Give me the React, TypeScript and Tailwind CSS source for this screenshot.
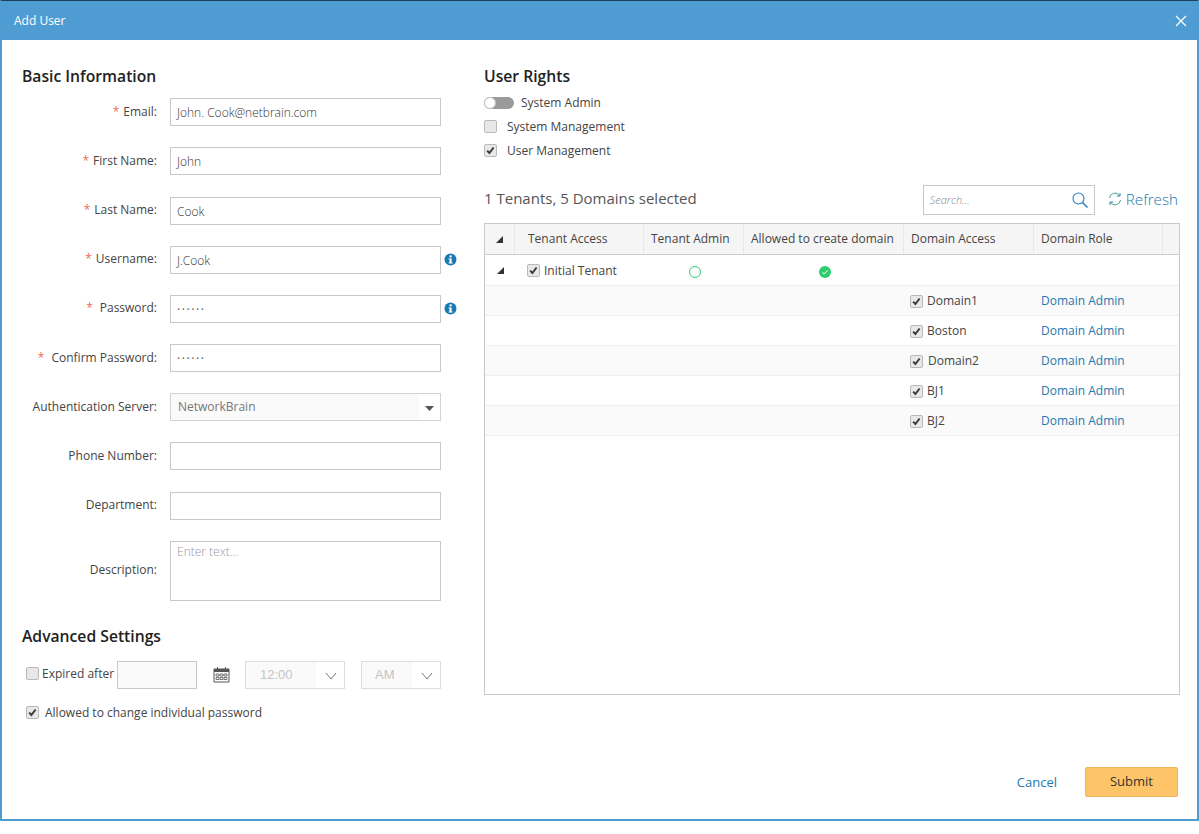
import React from "react";

const Box = ({ checked = false }: { checked?: boolean }) => (
  <span className="inline-flex w-[13px] h-[13px] shrink-0 items-center justify-center rounded-[2px] border border-[#b9b9b9] bg-[#e8e8e8]">
    {checked && (
      <svg width="9" height="9" viewBox="0 0 9 9">
        <path d="M1.2 4.6 L3.4 7 L7.6 1.5" fill="none" stroke="#3a3a3a" strokeWidth="2" />
      </svg>
    )}
  </span>
);

const Info = () => (
  <svg width="13" height="13" viewBox="0 0 13 13" className="shrink-0">
    <circle cx="6.5" cy="6.5" r="6" fill="#1b78b0" />
    <rect x="5.5" y="2.4" width="2.2" height="2" fill="#fff" />
    <path d="M4.6 5.4H7.6V9.4H8.6V10.6H4.6V9.4H5.5V6.6H4.6Z" fill="#fff" />
  </svg>
);

const Chevron = () => (
  <svg width="12" height="8" viewBox="0 0 12 8" className="ml-[2px]">
    <path d="M1 1 L6 7 L11 1" fill="none" stroke="#777" strokeWidth="1" />
  </svg>
);

const Tri = () => (
  <svg width="7" height="7" viewBox="0 0 7 7">
    <path d="M7 0V7H0Z" fill="#333" />
  </svg>
);

const Field = ({ label, req, gap, children, info, h = "h-[28px]" }: { label: string; req?: boolean; gap?: boolean; children: React.ReactNode; info?: boolean; h?: string }) => (
  <div className={`flex items-start ${h}`}>
    <div className="w-[135px] shrink-0 h-full pb-[1px] flex items-center justify-end text-[12px] text-[#444]">
      {req && <span className={`text-[#f06a55] ${gap ? "mr-[7px]" : "mr-[4px]"}`}>*</span>}
      {label}
    </div>
    <div className="ml-[13px] w-[271px] shrink-0 h-full">{children}</div>
    {info && <div className="ml-[3px] h-[28px] flex items-center"><Info /></div>}
  </div>
);

const TextBox = ({ value, dots }: { value?: string; dots?: boolean }) => (
  <div className={`h-full border border-[#c8c8c8] bg-white px-[6px] pt-[2px] flex items-center text-[12px] ${dots ? "font-normal tracking-[1.6px] text-[#555]" : "font-light text-[#333]"}`}>{value}</div>
);

const heads = ["", "Tenant Access", "Tenant Admin", "Allowed to create domain", "Domain Access", "Domain Role", ""];
const cols = "grid grid-cols-[30px_129px_100px_160px_130px_129px_1fr]";
const domains = ["Domain1", "Boston", "Domain2", "BJ1", "BJ2"];

export default function App() {
  return (
    <div className="w-[1199px] h-[834px] bg-white overflow-hidden" style={{ fontFamily: '"Open Sans", "Noto Sans", sans-serif' }}>
      <div className="h-[821px] flex flex-col border-t border-t-[#1f3f5f] border-x-2 border-b-2 border-x-[#4f9cd2] border-b-[#4f9cd2]">
        <div className="h-[39px] shrink-0 -mx-[2px] bg-[#4f9cd2] flex items-center justify-between pl-[14px] pr-[12px] text-white text-[12px]">
          <span>Add User</span>
          <svg width="12" height="12" viewBox="0 0 12 12">
            <path d="M1 1 L11 11 M11 1 L1 11" stroke="#fff" strokeWidth="1.2" />
          </svg>
        </div>

        <div className="flex-1 flex pl-[20px] min-h-0">
          <div className="w-[462px] shrink-0 pt-[26px]">
            <h2 className="h-[20px] leading-[20px] text-[15.7px] font-semibold text-[#222]">Basic Information</h2>
            <div className="mt-[12.3px] flex flex-col gap-[21.16px]">
              <Field label="Email:" req><TextBox value="John. Cook@netbrain.com" /></Field>
              <Field label="First Name:" req><TextBox value="John" /></Field>
              <Field label="Last Name:" req><TextBox value="Cook" /></Field>
              <Field label="Username:" req info><TextBox value="J.Cook" /></Field>
              <Field label="Password:" req gap info><TextBox dots value="······" /></Field>
              <Field label="Confirm Password:" req gap><TextBox dots value="······" /></Field>
              <Field label="Authentication Server:">
                <div className="h-full border border-[#d2d2d2] flex text-[12px] text-[#777]">
                  <div className="flex-1 bg-[#fafafa] px-[7px] flex items-center">NetworkBrain</div>
                  <div className="w-[21px] flex items-center justify-center pt-[2px]">
                    <svg width="9" height="5" viewBox="0 0 9 5"><path d="M0 0H9L4.5 5Z" fill="#555" /></svg>
                  </div>
                </div>
              </Field>
              <Field label="Phone Number:"><TextBox /></Field>
              <Field label="Department:"><TextBox /></Field>
              <Field label="Description:" h="h-[60px]">
                <div className="h-full border border-[#c8c8c8] px-[6px] py-[1px] text-[12px] font-light text-[#999]">Enter text...</div>
              </Field>
            </div>
            <h2 className="mt-[25.26px] h-[20px] leading-[20px] text-[15.7px] font-semibold text-[#222]">Advanced Settings</h2>
            <div className="mt-[15px] h-[28px] flex items-start pl-[4px]">
              <div className="h-[26px] flex items-center">
                <Box />
                <span className="ml-[3px] text-[12px] text-[#444] w-[75px]">Expired after</span>
              </div>
              <div className="w-[80px] h-full border border-[#c8c8c8] bg-[#fafafa]" />
              <div className="ml-[16px] h-full flex items-center">
                <svg width="17" height="17" viewBox="0 0 17 17">
                  <path d="M1 3H16V16H1Z" fill="none" stroke="#555" />
                  <path d="M1 3H16V6H1Z" fill="#555" />
                  <path d="M4.5 1V4M12.5 1V4" stroke="#555" />
                  <path d="M3 8H6V10H3ZM7 8H10V10H7ZM11 8H14V10H11ZM3 11.5H6V13.5H3ZM7 11.5H10V13.5H7ZM11 11.5H14V13.5H11Z" fill="none" stroke="#555" strokeWidth="0.8" />
                </svg>
              </div>
              <div className="ml-[15px] w-[100px] h-full border border-[#dddddd] flex text-[13px] text-[#c4c4c4]" style={{ fontFamily: '"Liberation Sans", sans-serif' }}>
                <div className="w-[70px] bg-[#fafafa] pl-[14px] flex items-center">12:00</div>
                <div className="flex-1 flex items-center justify-center pt-[2px]"><Chevron /></div>
              </div>
              <div className="ml-[16px] w-[80px] h-full border border-[#dddddd] flex text-[13px] text-[#c4c4c4]" style={{ fontFamily: '"Liberation Sans", sans-serif' }}>
                <div className="w-[50px] bg-[#fafafa] pl-[13px] flex items-center">AM</div>
                <div className="flex-1 flex items-center justify-center pt-[2px]"><Chevron /></div>
              </div>
            </div>
            <div className="mt-[15px] h-[18px] flex items-center pl-[4px] text-[12px] text-[#444]">
              <Box checked />
              <span className="ml-[6px]">Allowed to change individual password</span>
            </div>
          </div>

          <div className="w-[696px] shrink-0 pt-[26px] flex flex-col">
            <h2 className="h-[20px] leading-[20px] text-[15.7px] font-semibold text-[#222]">User Rights</h2>
            <div className="mt-[7px] h-[24px] flex items-center text-[12px] text-[#444] pb-[5px]">
              <span className="relative w-[30px] h-[12px] rounded-full bg-[#9a9a9a]">
                <span className="absolute left-0 top-0 w-[12px] h-[12px] rounded-full bg-white border border-[#c4c4c4]" />
              </span>
              <span className="ml-[7px]">System Admin</span>
            </div>
            <div className="h-[24px] flex items-center text-[12px] text-[#444] pb-[5px]">
              <Box /><span className="ml-[10px]">System Management</span>
            </div>
            <div className="h-[24px] flex items-center text-[12px] text-[#444] pb-[5px]">
              <Box checked /><span className="ml-[10px]">User Management</span>
            </div>

            <div className="mt-[20px] h-[30px] flex items-center pr-[2px]">
              <span className="pb-[3px] text-[15px] text-[#555]">1 Tenants, 5 Domains selected</span>
              <div className="ml-auto w-[172px] h-[30px] border border-[#c8c8c8] flex items-center justify-between pl-[6px] pr-[5px] text-[11px] italic font-light text-[#888]">
                <span>Search...</span>
                <svg width="18" height="18" viewBox="0 0 18 18">
                  <circle cx="7.5" cy="7.5" r="5.5" fill="none" stroke="#2b80b9" strokeWidth="1.1" />
                  <path d="M11.5 11.5 L16.5 16.5" stroke="#2b80b9" strokeWidth="1.6" />
                </svg>
              </div>
              <div className="ml-[13px] pb-[2px] flex items-center text-[15.2px] font-light text-[#2278ad]">
                <svg width="14" height="14" viewBox="0 0 14 14" className="mr-[4px]">
                  <path d="M1.5 6A5.5 5.5 0 0 1 11.5 3.5M12.5 8A5.5 5.5 0 0 1 2.5 10.5" fill="none" stroke="#45a88a" strokeWidth="1" />
                  <path d="M12 1V4H9M2 13V10H5" fill="none" stroke="#2b80b9" strokeWidth="1" />
                </svg>
                Refresh
              </div>
            </div>

            <div className="mt-[8px] h-[472px] border border-[#c8c8c8]">
              <div className={`${cols} h-[31px] bg-[#f5f5f5] border-b border-[#cccccc] text-[12px] text-[#444]`}>
                {heads.map((t, i) => (
                  <div key={i} className={`flex items-center ${i === 6 ? "" : "border-r border-[#e8e8e8]"} ${i === 0 ? "justify-center" : "pl-[7px]"} ${i === 1 ? "pl-[13px]" : ""}`}>
                    {i === 0 ? <Tri /> : t}
                  </div>
                ))}
              </div>
              <div className={`${cols} h-[31px] border-b border-[#eeeeee] text-[12px] text-[#444]`}>
                <div className="flex items-center justify-center"><Tri /></div>
                <div className="flex items-center pl-[12px] pt-[1px]"><Box checked /><span className="ml-[4px]">Initial Tenant</span></div>
                <div className="flex items-center justify-center pt-[3px] pl-[2px]">
                  <span className="w-[12px] h-[12px] rounded-full border border-[#2ecc71]" />
                </div>
                <div className="flex items-center justify-center pt-[3px] pl-[2px]">
                  <svg width="12" height="12" viewBox="0 0 12 12">
                    <circle cx="6" cy="6" r="6" fill="#2ecc71" />
                    <path d="M3.3 6.2 L5.2 8 L8.7 4.3" fill="none" stroke="#fff" strokeWidth="1" />
                  </svg>
                </div>
              </div>
              {domains.map((d, i) => (
                <div key={d} className={`${cols} h-[30px] border-b border-[#eeeeee] text-[12px] text-[#444] ${i % 2 === 0 ? "bg-[#fafafa]" : "bg-white"}`}>
                  <div className="col-span-4" />
                  <div className="flex items-center pl-[6px] pt-[1px]"><Box checked /><span className={i === 2 ? "ml-[5px]" : "ml-[4px]"}>{d}</span></div>
                  <div className="flex items-center pl-[7px] pt-[1px] text-[#2278ad]">Domain Admin</div>
                </div>
              ))}
            </div>

            <div className="mt-[72px] h-[30px] flex items-center pr-[2px] text-[13px]">
              <span className="ml-auto text-[#2278ad] pt-[2px]">Cancel</span>
              <div className="ml-[28px] w-[93px] h-[30px] rounded-[2px] border border-[#efb65c] bg-[#fdc567] flex items-center justify-center text-[#333]">Submit</div>
            </div>
          </div>
        </div>
      </div>
    </div>
  );
}
